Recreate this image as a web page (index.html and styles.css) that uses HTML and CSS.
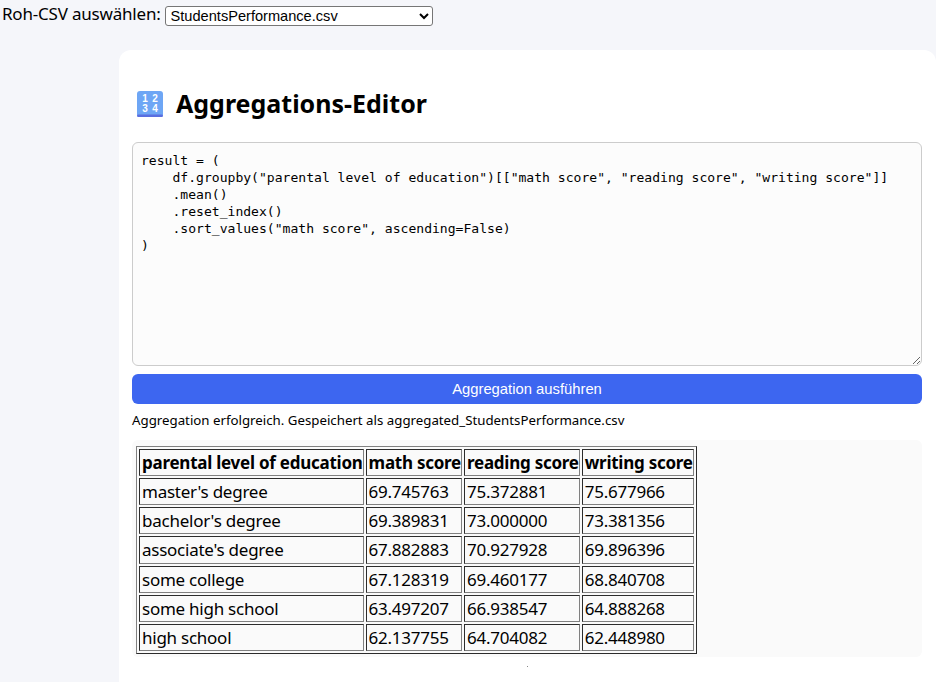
FILE: index.html
```html
<!DOCTYPE html>
<html lang="de">
<head>
<meta charset="utf-8">
<title>Aggregations-Editor</title>
<link rel="stylesheet" href="styles.css">
</head>
<body>
<div class="picker">
  <label class="picker-label" for="csv">Roh-CSV auswählen:</label>
  <select id="csv" class="picker-select"><option>StudentsPerformance.csv</option></select>
</div>
<main class="card">
  <h2 class="title">
    <svg class="title-icon" viewBox="0 0 26 26" width="26" height="26" aria-hidden="true">
      <rect x="0" y="0" width="26" height="26" rx="3" fill="#6ea6f5"/>
      <rect x="0" y="23.5" width="26" height="2.5" rx="1.2" fill="#5a6fe0"/>
      <text x="8" y="10.5" class="icon-digit">1</text>
      <text x="18" y="10.5" class="icon-digit">2</text>
      <text x="8" y="21" class="icon-digit">3</text>
      <text x="18" y="21" class="icon-digit">4</text>
    </svg>
    <span>Aggregations-Editor</span>
  </h2>
  <textarea class="editor" spellcheck="false">result = (
    df.groupby("parental level of education")[["math score", "reading score", "writing score"]]
    .mean()
    .reset_index()
    .sort_values("math score", ascending=False)
)</textarea>
  <button class="run" type="button">Aggregation ausführen</button>
  <p class="status">Aggregation erfolgreich. Gespeichert als aggregated_StudentsPerformance.csv</p>
  <div class="result">
    <table class="data" border="1">
      <thead>
        <tr><th>parental level of education</th><th>math score</th><th>reading score</th><th>writing score</th></tr>
      </thead>
      <tbody>
        <tr><td>master's degree</td><td>69.745763</td><td>75.372881</td><td>75.677966</td></tr>
        <tr><td>bachelor's degree</td><td>69.389831</td><td>73.000000</td><td>73.381356</td></tr>
        <tr><td>associate's degree</td><td>67.882883</td><td>70.927928</td><td>69.896396</td></tr>
        <tr><td>some college</td><td>67.128319</td><td>69.460177</td><td>68.840708</td></tr>
        <tr><td>some high school</td><td>63.497207</td><td>66.938547</td><td>64.888268</td></tr>
        <tr><td>high school</td><td>62.137755</td><td>64.704082</td><td>62.448980</td></tr>
      </tbody>
    </table>
  </div>
  <div class="dot"></div>
</main>
</body>
</html>
```
FILE: styles.css
```css
html, body {
  margin: 0;
  height: 682px;
  overflow: hidden;
}
body {
  background: #f5f6fa;
  color: #000;
  font-family: "Noto Sans", sans-serif;
  display: flex;
  flex-direction: column;
}
.picker {
  flex: none;
  height: 50px;
  padding: 2px 0 0 2px;
  box-sizing: border-box;
  display: flex;
  align-items: flex-start;
  gap: 4px;
}
.picker-label {
  font-size: 17px;
  letter-spacing: -0.2px;
  line-height: 24px;
}
.picker-select {
  width: 268px;
  height: 20px;
  margin-top: 4px;
  font: 14.6px "Liberation Sans", sans-serif;
  background: #fff;
  border: 1px solid #767676;
  border-radius: 3px;
  padding: 0 0 0 1px;
}
.card {
  flex: none;
  margin-left: 119px;
  background: #fff;
  border-radius: 12px 12px 0 0;
  padding: 0 14px 0 13px;
  height: 640px;
}
.title {
  margin: 0;
  padding: 37px 0 0 5px;
  height: 92px;
  box-sizing: border-box;
  display: flex;
  align-items: flex-start;
  gap: 13px;
  font-size: 25px;
  font-weight: 700;
  line-height: 33px;
}
.title-icon {
  margin-top: 4px;
}
.icon-digit {
  font: 700 10px "Liberation Sans", sans-serif;
  fill: #fff;
  text-anchor: middle;
}
.editor {
  display: block;
  width: 100%;
  height: 224px;
  box-sizing: border-box;
  padding: 9px 8px;
  border: 1px solid #ccc;
  border-radius: 6px;
  background: #fcfcfc;
  font: 13.07px/17px "DejaVu Sans Mono", monospace;
  color: #000;
  outline: 0;
}
.run {
  display: block;
  width: 100%;
  height: 30px;
  margin-top: 8px;
  border: 0;
  border-radius: 6px;
  background: #3d66f0;
  color: #fff;
  font: 14.8px "Liberation Sans", sans-serif;
}
.status {
  margin: 7px 0 0;
  font-size: 13.27px;
  line-height: 18px;
}
.result {
  margin-top: 11px;
  padding: 6px 4px 3px;
  background: #fafafa;
  border-radius: 6px;
}
.data {
  font-size: 17px;
  letter-spacing: -0.25px;
  line-height: 23.12px;
}
.data th, .data td {
  padding: 1px 0 1px 2px;
  text-align: left;
}
.dot {
  width: 1px;
  height: 1px;
  margin: 9px auto 0;
  background: #888;
}
```
